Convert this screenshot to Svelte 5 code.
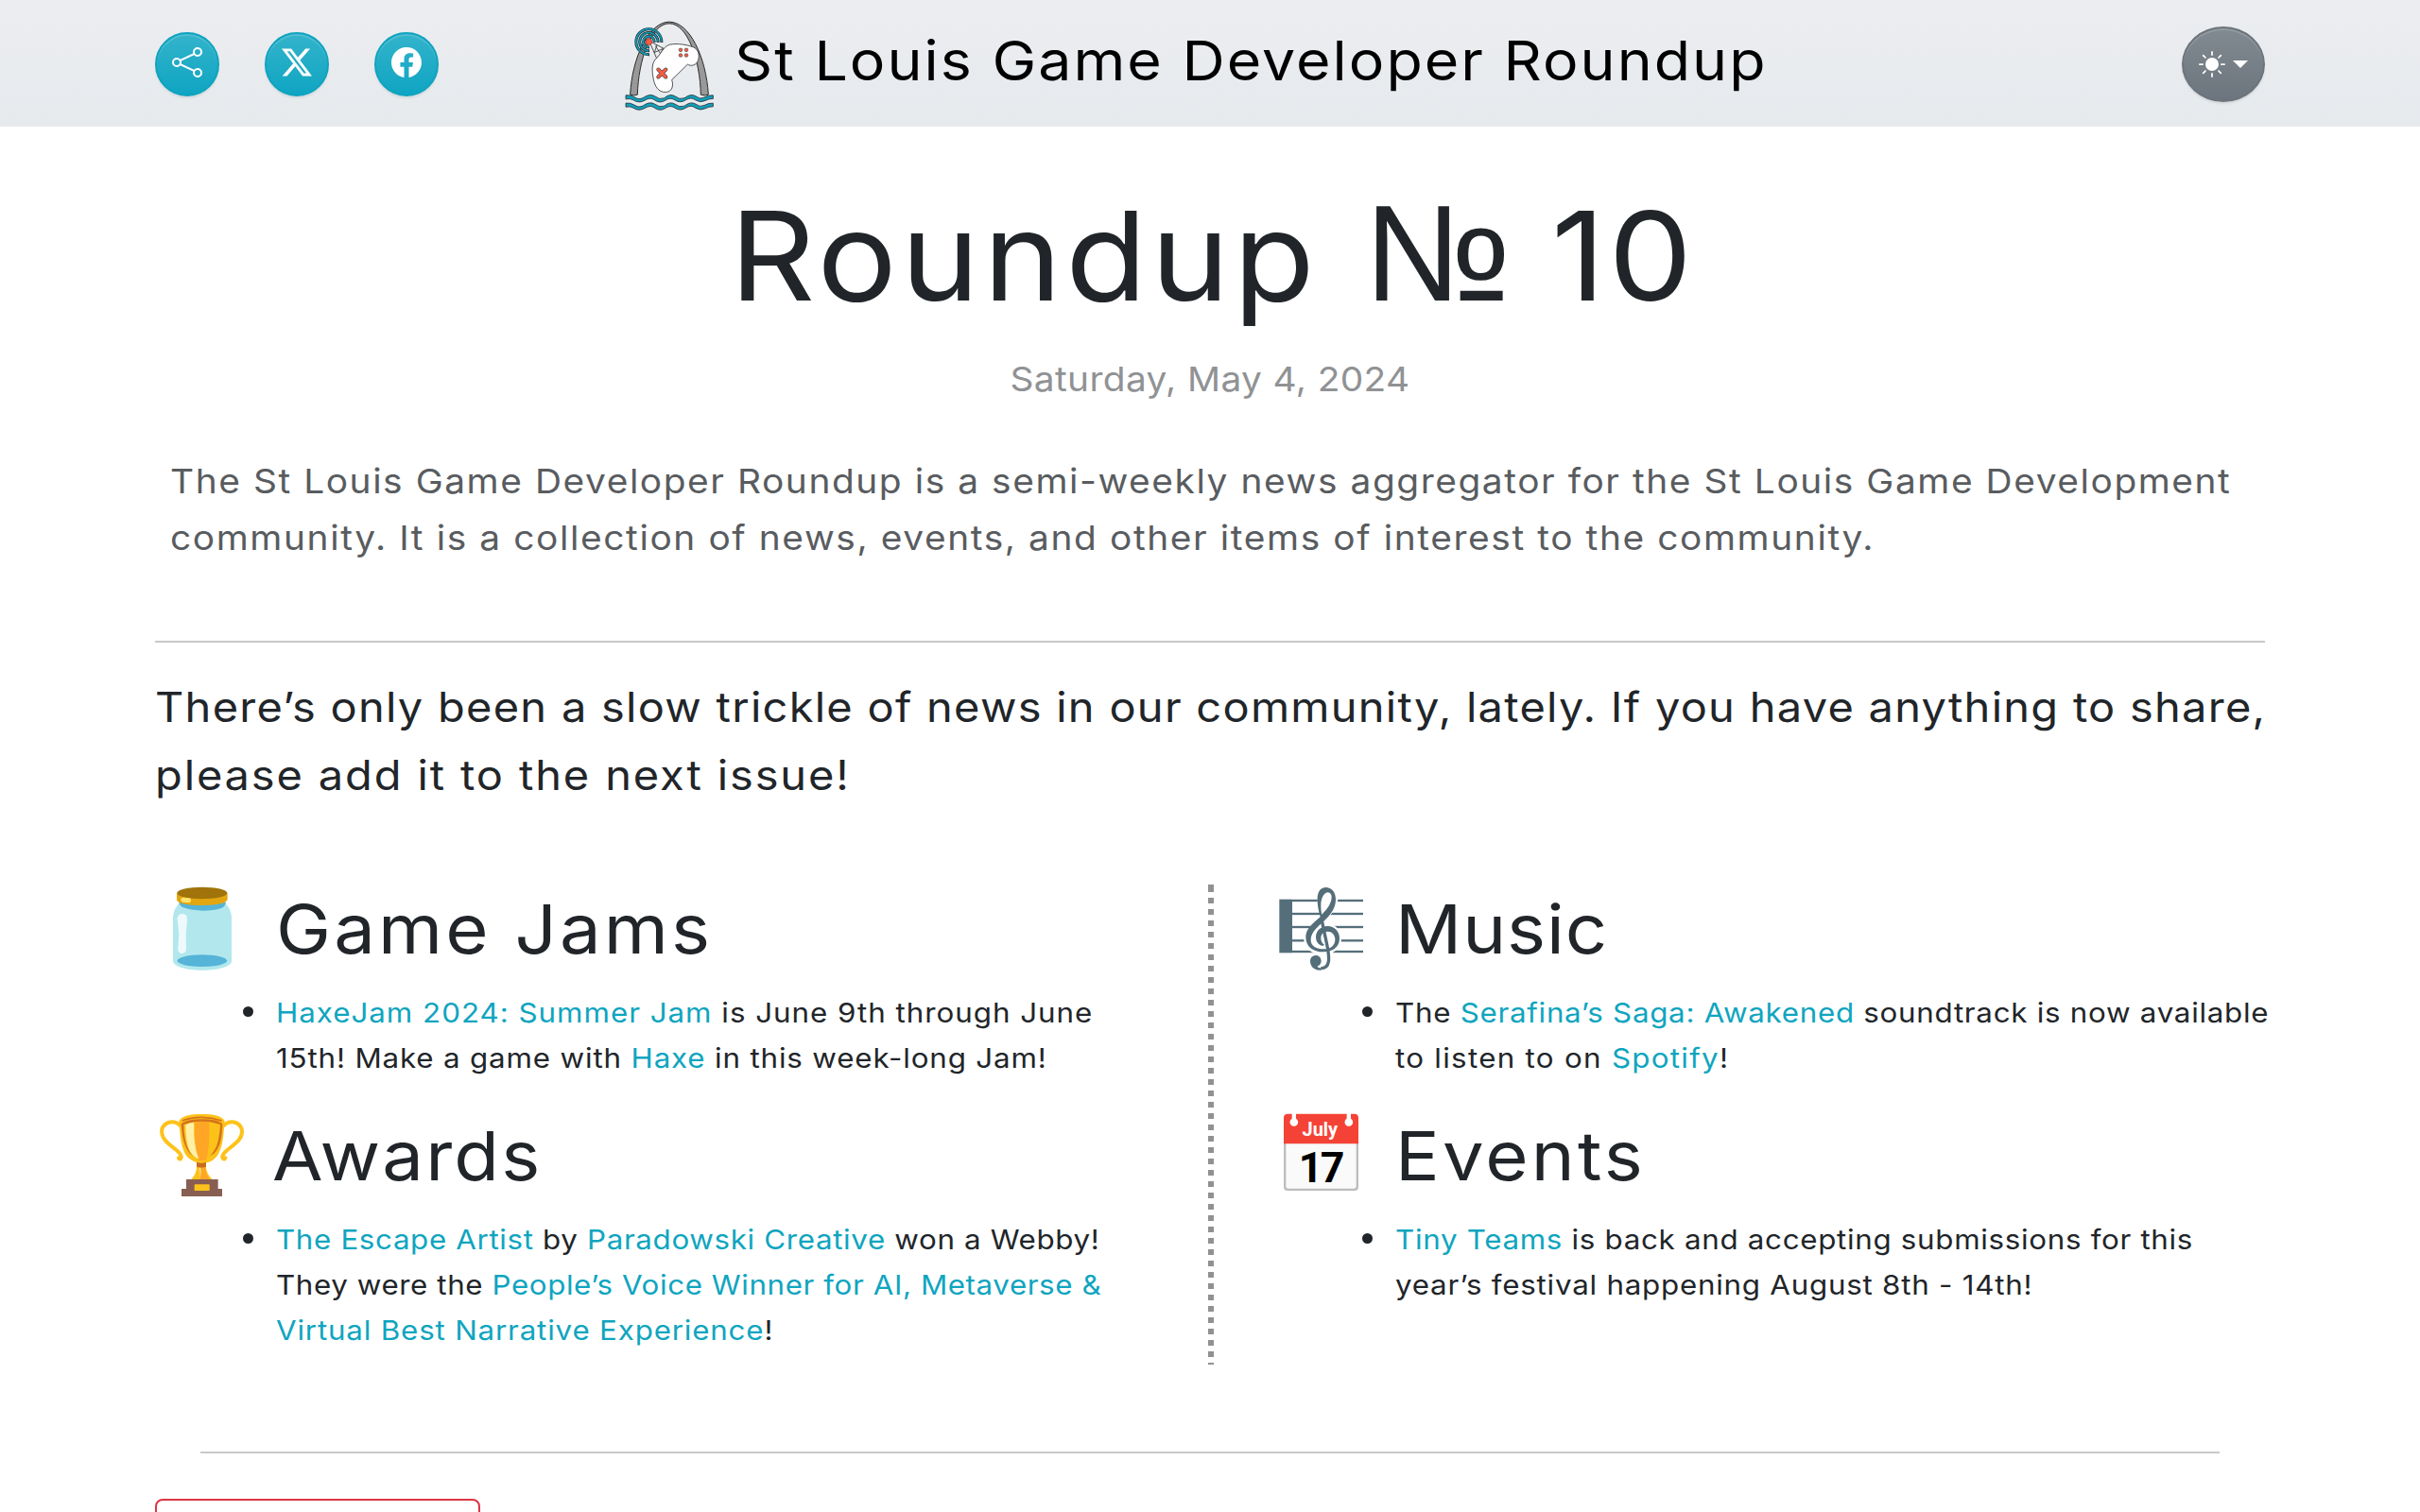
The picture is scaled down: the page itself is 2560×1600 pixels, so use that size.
<script>
  const intro = [
    { text: 'The St Louis Game Developer Roundup is a semi-weekly news aggregator for the St Louis Game Development', track: 0.04 },
    { text: 'community. It is a collection of news, events, and other items of interest to the community.', track: 0.0409 }
  ];
  const lead = [
    { text: 'There’s only been a slow trickle of news in our community, lately. If you have anything to share,', track: 0.0271 },
    { text: 'please add it to the next issue!', track: 0.0398 }
  ];

  // Each line is a list of [text, isLink] runs plus its letter spacing in em.
  const columns = [
    [
      {
        icon: 'jar', title: 'Game Jams', track: 0.04,
        lines: [
          { track: 0.0313, runs: [['HaxeJam 2024: Summer Jam', true], [' is June 9th through June', false]] },
          { track: 0.0267, runs: [['15th! Make a game with ', false], ['Haxe', true], [' in this week-long Jam!', false]] }
        ]
      },
      {
        icon: 'trophy', title: 'Awards', track: 0.028,
        lines: [
          { track: 0.0206, runs: [['The Escape Artist', true], [' by ', false], ['Paradowski Creative', true], [' won a Webby!', false]] },
          { track: 0.0187, runs: [['They were the ', false], ['People’s Voice Winner for AI, Metaverse &', true]] },
          { track: 0.0261, runs: [['Virtual Best Narrative Experience', true], ['!', false]] }
        ]
      }
    ],
    [
      {
        icon: 'music', title: 'Music', track: 0.012,
        lines: [
          { track: 0.0229, runs: [['The ', false], ['Serafina’s Saga: Awakened', true], [' soundtrack is now available', false]] },
          { track: 0.0409, runs: [['to listen to on ', false], ['Spotify', true], ['!', false]] }
        ]
      },
      {
        icon: 'calendar', title: 'Events', track: 0.041,
        lines: [
          { track: 0.022, runs: [['Tiny Teams', true], [' is back and accepting submissions for this', false]] },
          { track: 0.0242, runs: [['year’s festival happening August 8th - 14th!', false]] }
        ]
      }
    ]
  ];

  const social = [
    { label: 'Share', d: 'M13.5 1a1.5 1.5 0 1 0 0 3 1.5 1.5 0 0 0 0-3M11 2.5a2.5 2.5 0 1 1 .603 1.628l-6.718 3.12a2.5 2.5 0 0 1 0 1.504l6.718 3.12a2.5 2.5 0 1 1-.488.876l-6.718-3.12a2.5 2.5 0 1 1 0-3.256l6.718-3.12A2.5 2.5 0 0 1 11 2.5m-8.5 4a1.5 1.5 0 1 0 0 3 1.5 1.5 0 0 0 0-3m11 5.5a1.5 1.5 0 1 0 0 3 1.5 1.5 0 0 0 0-3' },
    { label: 'X', d: 'M12.6.75h2.454l-5.36 6.142L16 15.25h-4.937l-3.867-5.07-4.425 5.07H.316l5.733-6.57L0 .75h5.063l3.495 4.633L12.601.75Zm-.86 13.028h1.36L4.323 2.145H2.865z' },
    { label: 'Facebook', d: 'M16 8.049c0-4.446-3.582-8.05-8-8.05C3.58 0-.002 3.603-.002 8.05c0 4.017 2.926 7.347 6.75 7.951v-5.625h-2.03V8.05H6.75V6.275c0-2.017 1.195-3.131 3.022-3.131.876 0 1.791.157 1.791.157v1.98h-1.009c-.993 0-1.303.621-1.303 1.258v1.51h2.218l-.354 2.326H9.25V16c3.824-.604 6.75-3.934 6.75-7.951' }
  ];
  const rays = [0, 45, 90, 135, 180, 225, 270, 315];
  const waves = [0, 25];
  const staff = [99, 141, 183, 226, 261];
</script>

<header>
  <nav>
    {#each social as s}
      <a class="round" href="#top" aria-label={s.label}>
        <svg class="glyph" viewBox="0 0 16 16"><path d={s.d} /></svg>
      </a>
    {/each}
  </nav>
  <div class="brand">
    <svg class="logo" viewBox="60 33 288 290">
      <path d="M80 270C86 150 140 39 204 39S321 150 328 270Q316 275 304 270C302 160 262 44 204 44S106 160 103 270Q91 275 80 270Z" fill="#999" stroke="#2b2b2b" stroke-width="3" />
      <path d="M146 103L196 128L170 152L144 108" fill="#eef0f3" />
      <path d="M146 103L196 128M144 108L164 155M165 112L157 136L184 124L170 152M160 115L178 143" fill="none" stroke="#333" stroke-width="2.5" />
      <g fill="none" stroke-linecap="butt">
        {#each [17.5, 29, 40.5] as r}
          <path d="M{139 + r} 104A{r} {r} 0 1 0 141 {102 + r}" stroke="#203036" stroke-width="9" />
          <path d="M{139 + r} 101.500A{r} {r} 0 1 0 138.500 {102 + r}" stroke="#129ab5" stroke-width="5" />
        {/each}
      </g>
      <circle cx="139" cy="102" r="10" fill="#ff5a45" stroke="#7a3a34" stroke-width="2" />
      <path d="M166 152C182 131 190 115 206 111C230 106 262 112 280 119C298 127 300 146 296 160C289 179 273 180 262 174L212 223C218 240 214 261 193 262C168 263 158 241 154 222C149 196 146 166 166 152Z" fill="#fff" stroke="#333" stroke-width="2.5" />
      <path d="M169 190L193 214M193 190L169 214" stroke="#444" stroke-width="12" stroke-linecap="round" />
      <path d="M169 190L193 214M193 190L169 214" stroke="#ff5a45" stroke-width="8" stroke-linecap="round" />
      <g fill="#ff5a45" stroke="#444" stroke-width="2">
        <circle cx="240" cy="128" r="5.5" /><circle cx="258" cy="128" r="5.5" />
        <circle cx="240" cy="145" r="5.5" /><circle cx="258" cy="145" r="5.5" />
      </g>
      {#each waves as y}
        <path transform="translate(0 {y})" d="M66 272Q80 270 92 277Q107 288 121 280Q142 265 158 275Q172 287 188 281Q206 265 222 275Q236 287 252 281Q272 265 288 275Q300 286 315 279Q328 271 343 272V283Q330 282 318 289Q303 297 287 287Q273 276 256 287Q238 299 220 286Q206 277 190 289Q172 299 156 286Q143 277 126 288Q107 299 90 287Q79 281 66 284Z" fill="#129fb9" stroke="#23323a" stroke-width="2.5" />
      {/each}
    </svg>
    <span class="site">St Louis Game Developer Roundup</span>
  </div>
  <button class="theme" aria-label="Theme">
    <svg class="sun" viewBox="-14 -14 28 28">
      <circle r="7" />
      {#each rays as a}<path d="M0 -13.1V-9.9" transform="rotate({a})" />{/each}
    </svg>
    <span class="caret"></span>
  </button>
</header>

<main id="top">
  <h1><span class="word">Roundup</span> <span class="numero">№</span> <span class="ten">10</span></h1>
  <p class="date">Saturday, May 4, 2024</p>
  <p class="intro">
    {#each intro as l}<span class="line" style:letter-spacing="{l.track}em">{l.text}</span>{/each}
  </p>
  <hr />
  <p class="lead">
    {#each lead as l}<span class="line" style:letter-spacing="{l.track}em">{l.text}</span>{/each}
  </p>

  <div class="columns">
    {#each columns as col}
      <div class="col">
        {#each col as s}
          <section>
            <h2>
              <svg class="emoji" viewBox="42 48 288 288">
                {#if s.icon === 'jar'}
                  <path d="M118 108C104 124 99 138 99 158V290C99 308 140 320 192 320S285 308 285 290V158C285 138 280 124 266 108Z" fill="#b2e8ed" />
                  <path d="M118 104Q119 115 132 121Q160 131 194 131T253 123Q264 118 267 104Z" fill="#55b4d7" />
                  <ellipse cx="191.500" cy="290" rx="79" ry="19" fill="#55b4d7" />
                  <path d="M111 75V96C111 108 146 114 192 114S272 108 272 94V75Z" fill="#e2a610" />
                  <ellipse cx="191.500" cy="75" rx="79.500" ry="19" fill="#a0740b" />
                  <rect x="124" y="90" width="32" height="15" rx="7.500" fill="#ffe36c" transform="rotate(7 140 98)" />
                  <path d="M129 141C139 141 145 148 144 160L140 205L141 252C141 262 135 267 127 267S114 260 115 249L118 205L113 160C112 148 119 141 129 141Z" fill="#eef9fb" />
                {:else if s.icon === 'trophy'}
                  <g fill="none" stroke="#fdc21a" stroke-width="12" stroke-linecap="round">
                    <path d="M123 94C104 74 73 80 64 104C59 134 83 150 110 171Q131 190 124 198Q120 202 117 196" />
                    <path d="M259 94C278 74 309 80 317 104C323 134 298 150 271 171Q250 190 258 198Q262 202 265 196" />
                  </g>
                  <path d="M118 78C127 62 155 57 191 57S254 62 263 78C259 120 259 157 242 185C230 205 208 213 191 213S149 203 138 184C123 157 122 120 118 78Z" fill="#fdc21a" />
                  <path d="M125 88C141 75 163 73 191 73S241 75 256 88C255 132 248 163 230 181Q212 196 191 197Q169 195 153 182C133 162 128 126 125 88Z" fill="#d4731c" />
                  <path d="M133 90Q160 80 191 80T249 90C246 134 240 162 225 179Q208 203 188 205Q162 196 149 171Q134 143 133 90Z" fill="#fdc21a" />
                  <path d="M168 83Q191 79 214 83V120Q214 169 204 205H180Q168 170 168 120Z" fill="#ffa626" />
                  <path d="M139 91Q151 84 165 84Q163 157 181 199Q158 190 148 164Q139 133 139 91Z" fill="#fff0a8" />
                  <path d="M128 78Q159 66 191 67T254 78" fill="none" stroke="#d4731c" stroke-width="5" />
                  <path d="M174 210H204V224Q204 245 224 264H157Q174 245 174 224Z" fill="#fdc21a" />
                  <path d="M182 224H198Q201 247 203 264H184Q187 245 182 224Z" fill="#fff0a8" />
                  <path d="M186 224H200Q202 245 214 264H183Q190 247 186 224Z" fill="#ffa626" />
                  <path d="M174 209Q189 215 204 209V224Q189 229 174 224Z" fill="#c96c1d" />
                  <path d="M141 264H242V294H255V318H126V294H141Z" fill="#885e52" />
                  <rect x="167" y="280" width="48" height="20" rx="2" fill="#fdc21a" />
                {:else if s.icon === 'music'}
                  <g fill="#546e7a">
                    <rect x="58" y="95" width="41" height="170" />
                    {#each staff as y}<rect x="99" y={y - 3.5} width="225" height="7" />{/each}
                  </g>
                  <path d="M187 110C184 78 191 58 206 58C224 58 238 73 237 96C235 121 217 141 197 158C170 182 143 200 143 224C143 248 165 262 197 262C230 262 248 246 248 219C248 198 234 181 211 181L200 150Z M216 235C224 262 229 319 190 320C170 320 157 308 157 291" fill="#fff" stroke="#fff" stroke-width="14" />
                  <path fill-rule="evenodd" fill="#546e7a" d="M188 151C180 123 178 101 179 88C181 67 192 57 205 57C224 57 237 72 237 95C237 119 225 139 204 160C181 182 158 199 158 224C158 243 175 253 200 253C222 253 235 240 235 222C235 207 224 197 211 197C198 197 190 206 190 218C190 228 194 234 201 239L196 243C181 239 174 228 174 215C174 195 190 180 211 180C233 180 249 197 249 219C249 246 228 262 197 262C164 262 142 244 142 215C142 189 164 171 188 151ZM193 143C209 128 224 107 224 88C224 78 218 73 211 73C198 75 190 94 190 113C190 125 191 135 193 143Z" />
                  <path d="M192 158L209 238C218 282 220 314 190 314" fill="none" stroke="#546e7a" stroke-width="10" />
                  <path d="M191 291C191 299 186 305 178 308Q182 314 194 313L190 320C169 321 156 308 156 291C156 280 164 273 174 273S191 281 191 291Z" fill="#546e7a" />
                {:else}
                  <rect x="72" y="60" width="237" height="240" rx="12" fill="#bdbdbd" />
                  <path d="M79 140H302V285Q302 293 294 293H87Q79 293 79 285Z" fill="#fafafa" />
                  <path d="M72 151V69Q72 56 85 56H296Q309 56 309 69V151Z" fill="#f44336" />
                  <path d="M98 54H111V71A13 13 0 1 1 98 71ZM272 54H285V71A13 13 0 1 1 272 71Z" fill="#fff" />
                  <text class="month" x="187" y="125">July</text>
                  <text class="day" x="188" y="273">17</text>
                {/if}
              </svg>
              <span class="heading {s.icon}" style:letter-spacing="{s.track}em">{s.title}</span>
            </h2>
            <ul>
              <li>
                {#each s.lines as l}
                  <span class="line" style:letter-spacing="{l.track}em">{#each l.runs as [text, link]}{#if link}<a href="#top">{text}</a>{:else}{text}{/if}{/each}</span>
                {/each}
              </li>
            </ul>
          </section>
        {/each}
      </div>
    {/each}
    <div class="divider"></div>
  </div>

  <hr class="inset" />
  <div class="cta"></div>
</main>

<style>
  :global(body) {
    margin: 0;
    height: 1600px;
    overflow: hidden;
    background: #fff;
    color: #212529;
    font-family: Inter, 'Liberation Sans', sans-serif;
  }
  header {
    box-sizing: border-box;
    height: 134px;
    padding: 0 164px;
    display: flex;
    align-items: center;
    background: linear-gradient(#ecedf1, #e6eaed);
  }
  nav { display: flex; gap: 48px; padding-top: 2px; }
  .round, .theme {
    box-sizing: border-box;
    display: flex;
    justify-content: center;
    border: 2px solid #0fa3bf;
    box-shadow: inset 0 2px 0 rgba(255, 255, 255, .15), 0 2px 2px rgba(0, 0, 0, .075);
  }
  .round {
    width: 68px;
    height: 68px;
    padding-top: 14px;
    border-radius: 50%;
    background: linear-gradient(#33b3cb, #0fa5c2);
  }
  .glyph { width: 32px; height: 32px; fill: #fff; }
  .brand { display: flex; align-items: center; margin-left: 196px; }
  .logo { width: 96px; height: 97px; margin-top: 4px; }

  /* The typeface is drawn slightly wide throughout. */
  .site, .word, .ten, .line, .heading { transform: scaleX(1.08); transform-origin: 0 50%; }

  .site {
    margin: -6px 0 0 21px;
    font-size: 58px;
    line-height: 80px;
    letter-spacing: .0324em;
    color: #000;
    white-space: nowrap;
  }
  .theme {
    width: 88px;
    height: 80px;
    margin: 2px 0 0 auto;
    padding: 0;
    align-items: center;
    gap: 8px;
    border-color: #6c757d;
    border-radius: 44px / 40px;
    background: linear-gradient(#828a91, #6c757d);
  }
  .sun { width: 28px; height: 28px; fill: #fff; stroke: #fff; stroke-width: 1.75; stroke-linecap: round; }
  .sun circle { stroke: none; }
  .caret { border: 8px solid transparent; border-top-color: #fff; border-bottom: 0; }

  main { padding: 50px 164px 0; }
  h1, h2, p, ul { margin: 0; padding: 0; font-weight: 400; }
  h1 {
    display: grid;
    grid-template-columns: 671px 198px auto;
    align-items: baseline;
    height: 173px;
    padding-left: 608px;
    font-size: 130px;
    line-height: 173px;
    white-space: nowrap;
  }
  .word { letter-spacing: .03em; }
  .ten { letter-spacing: .025em; }
  .numero { font-family: 'Liberation Sans', sans-serif; font-size: 145px; line-height: 0; }
  .date {
    padding-top: 14px;
    text-align: center;
    font-size: 36px;
    line-height: 60px;
    letter-spacing: .0095em;
    transform: scaleX(1.08);
    color: #909294;
  }
  .intro {
    padding: 48px 16px 0;
    font-size: 36px;
    line-height: 60px;
    color: #595c5f;
  }
  .line { display: block; white-space: pre; }
  hr {
    height: 2px;
    margin: 79px 0 32px;
    border: 0;
    background: #c7c8c9;
  }
  .lead { font-size: 43.5px; line-height: 72px; }
  .columns {
    position: relative;
    display: grid;
    grid-template-columns: repeat(2, minmax(0, 1fr));
    column-gap: 136px;
    height: 508px;
    margin-top: 80px;
  }
  .col { display: flex; flex-direction: column; gap: 32px; }
  .divider {
    position: absolute;
    left: 1114px;
    top: 0;
    width: 6px;
    height: 504px;
    background:
      linear-gradient(#909192, #909192) 0 0 / 6px 8px no-repeat,
      linear-gradient(#909192 6px, transparent 6px) 0 2px / 6px 12px repeat-y;
  }
  h2 { display: flex; height: 96px; margin-bottom: 16px; }
  .emoji { width: 96px; height: 96px; flex: none; }
  .heading { margin: -1px 0 0 32px; font-size: 72px; line-height: 96px; white-space: nowrap; }
  .heading.trophy { margin-left: 28px; }
  .month, .day { font-family: Roboto, sans-serif; text-anchor: middle; }
  .month { font-size: 60px; font-weight: 700; fill: #fff; }
  .day { font-size: 134px; font-weight: 700; letter-spacing: -8px; fill: #000; }
  ul { list-style: none; }
  li { position: relative; padding-left: 128px; font-size: 29px; line-height: 48px; }
  li::before {
    content: '';
    position: absolute;
    left: 93px;
    top: 17px;
    width: 11px;
    height: 11px;
    border-radius: 50%;
    background: #212529;
  }
  .divider { height: 508px; }
  a { color: #0fa5bf; text-decoration: none; }
  hr.inset { margin: 92px 48px 48px; }
  .cta {
    box-sizing: border-box;
    width: 344px;
    height: 76px;
    border: 2px solid #dc3545;
    border-radius: 8px;
  }
</style>
